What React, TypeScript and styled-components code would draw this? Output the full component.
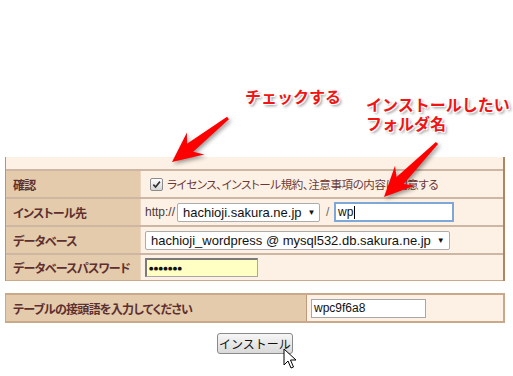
import React from "react";
import styled, { createGlobalStyle } from "styled-components";

const GlobalStyle = createGlobalStyle`
  html, body { margin: 0; padding: 0; background: #ffffff; }
  body { font-family: "Noto Sans CJK JP", "Liberation Sans", sans-serif; }
`;

const Page = styled.div`
  position: relative;
  width: 513px;
  height: 376px;
  overflow: hidden;
  box-sizing: border-box;
  padding-top: 157px;
  display: flex;
  flex-direction: column;
  background: #ffffff;
`;

const FormTable = styled.div`
  margin-left: 5px;
  width: 500px;
  box-sizing: border-box;
  background: #fdf1e5;
  border-left: 1px solid #b89474;
  border-right: 2px solid #b08660;
  display: flex;
  flex-direction: column;
`;

const HeaderBand = styled.div`
  height: 12px;
`;

const Row = styled.div<{ $last?: boolean }>`
  display: flex;
  height: 28px;
  box-sizing: border-box;
  border-top: 2px solid #cdb7a4;
  border-bottom: ${(p) => (p.$last ? "1px solid #c9a98a" : "none")};
`;

const Label = styled.div<{ $w: number }>`
  width: ${(p) => p.$w}px;
  flex: none;
  box-sizing: border-box;
  background: #e3cbac;
  display: flex;
  align-items: center;
  padding-left: 7px;
  font-size: 12px;
  font-weight: 700;
  letter-spacing: -0.7px;
  color: #5e2f2f;
  font-feature-settings: "palt" 1;
  white-space: nowrap;
`;

const Cell = styled.div`
  flex: 1;
  display: flex;
  align-items: center;
  padding-left: 4px;
  border-left: 1px solid #e9d6c2;
  font-size: 11.5px;
  letter-spacing: -0.4px;
  color: #6a3a3a;
  white-space: nowrap;
  font-feature-settings: "palt" 1;
`;

const CheckBox = styled.span`
  width: 11px;
  height: 11px;
  margin-left: 5px;
  margin-right: 4px;
  border: 1px solid #8c8c8c;
  border-radius: 2px;
  background: linear-gradient(#ffffff, #d6d6d6);
  display: inline-flex;
  align-items: center;
  justify-content: center;
`;

const Plain = styled.span`
  font-family: "Liberation Sans", Arial, sans-serif;
  font-size: 12px;
  letter-spacing: 0;
  color: #4a3a3a;
  margin-right: 2px;
`;

const SelectBox = styled.div<{ $w: number }>`
  width: ${(p) => p.$w}px;
  height: 19px;
  box-sizing: border-box;
  border: 1px solid #acacac;
  border-radius: 2px;
  background: #ffffff;
  display: flex;
  align-items: center;
  justify-content: space-between;
  padding: 0 5px;
  font-family: "Liberation Sans", Arial, sans-serif;
  font-size: 13px;
  letter-spacing: 0;
  color: #111111;
`;

const DropArrow = styled.span`
  font-size: 8px;
  color: #111;
  margin-left: 6px;
`;

const Slash = styled.span`
  font-family: "Liberation Sans", Arial, sans-serif;
  font-size: 12px;
  color: #6a6a6a;
  margin: 0 5px 0 6px;
`;

const TextField = styled.div<{ $w: number; $focus?: boolean; $yellow?: boolean }>`
  width: ${(p) => p.$w}px;
  height: ${(p) => (p.$focus ? 20 : 19)}px;
  box-sizing: border-box;
  background: ${(p) => (p.$yellow ? "#ffffc4" : "#ffffff")};
  border: ${(p) => (p.$focus ? "2px solid #7ea6d8" : "1px solid #a8a8a8")};
  border-top-color: ${(p) => (p.$yellow ? "#7a7a7a" : p.$focus ? "#7ea6d8" : "#a8a8a8")};
  border-left-color: ${(p) => (p.$yellow ? "#7a7a7a" : p.$focus ? "#7ea6d8" : "#a8a8a8")};
  border-width: ${(p) => (p.$yellow ? "2px 1px 1px 2px" : undefined)};
  display: flex;
  align-items: center;
  padding-left: 2px;
  font-family: "Liberation Sans", Arial, sans-serif;
  font-size: 12px;
  letter-spacing: 0;
  color: #111;
`;

const Caret = styled.span`
  width: 1px;
  height: 13px;
  background: #000;
  margin-left: 1px;
`;

const Dots = styled.span`
  font-size: 5px;
  letter-spacing: 0.4px;
  color: #111;
  font-family: "DejaVu Sans", sans-serif;
`;

const PrefixTable = styled.div`
  margin-left: 5px;
  margin-top: 12px;
  width: 500px;
  height: 30px;
  box-sizing: border-box;
  background: #fdf1e5;
  border: 2px solid #c9a98a;
  border-left-width: 1px;
  display: flex;
`;

const PrefixCell = styled(Cell)`
  border-left: 1px solid #bc9c7c;
`;

const ButtonRow = styled.div`
  margin-top: 10px;
  display: flex;
  justify-content: center;
`;

const Button = styled.button`
  width: 76px;
  height: 21px;
  box-sizing: border-box;
  margin-right: 3px;
  border: 1px solid #8a8a8a;
  border-radius: 3px;
  background: linear-gradient(#f6f6f6, #dadada);
  font-family: "Noto Sans CJK JP", sans-serif;
  font-size: 12px;
  color: #111;
  padding: 0;
  line-height: 18px;
  white-space: nowrap;
`;

const Note = styled.div<{ $x: number; $y: number }>`
  position: absolute;
  left: ${(p) => p.$x}px;
  top: ${(p) => p.$y}px;
  font-size: 16px;
  line-height: 19px;
  font-weight: 700;
  color: #f01414;
  white-space: nowrap;
  text-shadow: -1px -1px 0 #fff, 1px -1px 0 #fff, -1px 1px 0 #fff, 1px 1px 0 #fff,
    2px 2px 3px rgba(0, 0, 0, 0.45);
`;

const NoteLine = styled.div``;

const Overlay = styled.svg`
  position: absolute;
  left: 0;
  top: 0;
  pointer-events: none;
`;

const ArrowGroup = styled.g`
  filter: drop-shadow(2px 2px 2px rgba(0, 0, 0, 0.4));
`;

function Arrow({ tip, tail }: { tip: [number, number]; tail: [number, number] }) {
  const dx = tail[0] - tip[0];
  const dy = tail[1] - tip[1];
  const L = Math.sqrt(dx * dx + dy * dy);
  const a = (Math.atan2(dy, dx) * 180) / Math.PI;
  const pts = `0,0 30,-14 23,-5 ${L},-1.5 ${L},1.5 23,5 30,14`;
  return (
    <ArrowGroup>
      <polygon points={pts} fill="#ff0000" transform={`translate(${tip[0]} ${tip[1]}) rotate(${a})`} />
    </ArrowGroup>
  );
}

export default function App() {
  return (
    <>
      <GlobalStyle />
      <Page>
        <FormTable>
          <HeaderBand />
          <Row>
            <Label $w={134}>確認</Label>
            <Cell>
              <CheckBox>
                <svg width="9" height="9" viewBox="0 0 10 10">
                  <path d="M1.5 5.2 L4 7.8 L8.8 1.8" fill="none" stroke="#333" strokeWidth="1.8" />
                </svg>
              </CheckBox>
              ライセンス、インストール規約、注意事項の内容に同意する
            </Cell>
          </Row>
          <Row>
            <Label $w={134}>インストール先</Label>
            <Cell>
              <Plain>http://</Plain>
              <SelectBox $w={143}>
                hachioji.sakura.ne.jp<DropArrow>▼</DropArrow>
              </SelectBox>
              <Slash>/</Slash>
              <TextField $w={120} $focus>
                wp<Caret />
              </TextField>
            </Cell>
          </Row>
          <Row>
            <Label $w={134}>データベース</Label>
            <Cell>
              <SelectBox $w={305}>
                hachioji_wordpress @ mysql532.db.sakura.ne.jp<DropArrow>▼</DropArrow>
              </SelectBox>
            </Cell>
          </Row>
          <Row $last>
            <Label $w={134}>データベースパスワード</Label>
            <Cell>
              <TextField $w={113} $yellow>
                <Dots>●●●●●●●</Dots>
              </TextField>
            </Cell>
          </Row>
        </FormTable>

        <PrefixTable>
          <Label $w={300}>テーブルの接頭語を入力してください</Label>
          <PrefixCell>
            <TextField $w={115}>wpc9f6a8</TextField>
          </PrefixCell>
        </PrefixTable>

        <ButtonRow>
          <Button>インストール</Button>
        </ButtonRow>

        <Note $x={245} $y={87}>チェックする</Note>
        <Note $x={366} $y={95}>
          <NoteLine>インストールしたい</NoteLine>
          <NoteLine>フォルダ名</NoteLine>
        </Note>

        <Overlay width="513" height="376" viewBox="0 0 513 376">
          <Arrow tip={[172, 162]} tail={[228, 118]} />
          <Arrow tip={[384, 197]} tail={[437, 143]} />
          <path
            d="M284 349 L284 365 L288 361 L291 368 L293.5 367 L290.5 360 L296 360 Z"
            fill="#ffffff"
            stroke="#000000"
            strokeWidth="1"
            strokeLinejoin="round"
          />
        </Overlay>
      </Page>
    </>
  );
}
